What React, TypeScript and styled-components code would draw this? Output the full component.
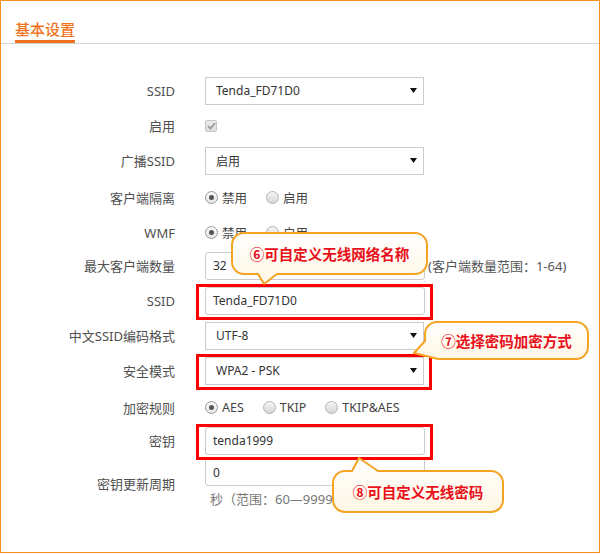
import React from "react";
import styled, { createGlobalStyle } from "styled-components";

const Global = createGlobalStyle`
  html, body { margin: 0; padding: 0; background: #fff; }
  body { font-family: "Noto Sans", "Noto Sans CJK SC", sans-serif; }
  * { box-sizing: border-box; }
`;

const Page = styled.div`
  position: relative;
  width: 600px;
  height: 553px;
  border: 1px solid #f39120;
  overflow: hidden;
  background: #fff;
`;

const Header = styled.div`
  display: flex;
  align-items: flex-end;
  padding: 18px 0 0 14px;
  border-bottom: 1px solid #d4d4d4;
`;

const Title = styled.h2`
  margin: 0;
  font-family: "Noto Sans CJK SC", sans-serif;
  font-size: 15px;
  line-height: 20px;
  font-weight: 500;
  color: #f0731e;
  padding-bottom: 1px;
  border-bottom: 3px solid #f07020;
`;

const Form = styled.div`
  padding-top: 29px;
`;

const Row = styled.div<{ $pt?: number; $auto?: boolean }>`
  display: grid;
  grid-template-columns: 174px 1fr;
  column-gap: 30px;
  align-items: center;
  height: ${(p) => (p.$auto ? "auto" : "35px")};
  padding-top: ${(p) => p.$pt ?? 0}px;
`;

const Label = styled.div`
  text-align: right;
  font-size: 13px;
  line-height: 18px;
  color: #4f4f4f;
  font-family: "Noto Sans", "Noto Sans CJK SC", sans-serif;
`;

const Control = styled.div<{ $column?: boolean }>`
  display: flex;
  flex-direction: ${(p) => (p.$column ? "column" : "row")};
  align-items: ${(p) => (p.$column ? "flex-start" : "center")};
`;

const Field = styled.div`
  position: relative;
  display: flex;
`;

const SelectBox = styled.div`
  width: 219px;
  height: 28px;
  border: 1px solid #ccc;
  background: #fff;
  display: flex;
  align-items: center;
  justify-content: space-between;
  padding: 0 6px 0 10px;
  font-size: 12px;
  color: #333;
  font-family: "Noto Sans", "Noto Sans CJK SC", sans-serif;
`;

const TextInput = styled.input`
  width: 220px;
  height: 28px;
  border: 1px solid #ccc;
  border-radius: 3px;
  padding: 0 7px;
  font-size: 12px;
  color: #333;
  font-family: "Noto Sans", "Noto Sans CJK SC", sans-serif;
  background: #fff;
  outline: none;
`;

const Highlight = styled.span`
  position: absolute;
  top: -3px;
  right: -8px;
  bottom: -5px;
  left: -9px;
  border: 3px solid #ff0000;
  pointer-events: none;
`;

const CheckBox = styled.span`
  width: 12px;
  height: 12px;
  border: 1px solid #c6c6c6;
  border-radius: 2px;
  background: linear-gradient(#ececec, #dcdcdc);
  display: flex;
  align-items: center;
  justify-content: center;
`;

const Option = styled.label`
  display: flex;
  align-items: center;
  gap: 4px;
  margin-right: 19px;
  font-size: 12.5px;
  color: #444;
  font-family: "Noto Sans", "Noto Sans CJK SC", sans-serif;
`;

const RadioDot = styled.span<{ $on?: boolean }>`
  position: relative;
  width: 13px;
  height: 13px;
  border-radius: 50%;
  border: 1px solid ${(p) => (p.$on ? "#9a9a9a" : "#b4b4b4")};
  background: ${(p) =>
    p.$on ? "linear-gradient(#fafafa, #e6e6e6)" : "linear-gradient(#f6f6f6, #d6d6d6)"};
  &::after {
    content: "";
    display: ${(p) => (p.$on ? "block" : "none")};
    position: absolute;
    left: 50%;
    top: 50%;
    width: 5px;
    height: 5px;
    margin: -2.5px 0 0 -2.5px;
    border-radius: 50%;
    background: #555;
  }
`;

const Hint = styled.span`
  margin-left: 3px;
  font-size: 13px;
  color: #555;
  font-family: "Noto Sans", "Noto Sans CJK SC", sans-serif;
`;

const SubHint = styled.div`
  margin: 3px 0 0 5px;
  font-size: 13px;
  line-height: 20px;
  color: #777;
  font-family: "Noto Sans", "Noto Sans CJK SC", sans-serif;
`;

const Callout = styled.div<{ $x: number; $y: number; $w: number; $h: number }>`
  position: absolute;
  left: ${(p) => p.$x - 1}px;
  top: ${(p) => p.$y - 1}px;
  width: ${(p) => p.$w}px;
  height: ${(p) => p.$h}px;
  display: flex;
  align-items: center;
  justify-content: center;
  z-index: 3;
`;

const BubbleSvg = styled.svg`
  position: absolute;
  left: 0;
  top: 0;
  overflow: visible;
`;

const CalloutText = styled.span`
  position: relative;
  font-family: "Noto Sans CJK SC", sans-serif;
  font-weight: 700;
  font-size: 14.5px;
  color: #e8101a;
  white-space: nowrap;
`;

const Arrow = () => (
  <svg width="7" height="5" viewBox="0 0 7 5">
    <path d="M0 0 H7 L3.5 5 Z" fill="#111" />
  </svg>
);

const Select = ({ value }: { value: string }) => (
  <SelectBox>
    <span>{value}</span>
    <Arrow />
  </SelectBox>
);

const Radio = ({ on, text }: { on?: boolean; text: string }) => (
  <Option>
    <RadioDot $on={on} />
    <span>{text}</span>
  </Option>
);

type BubbleProps = { x: number; y: number; w: number; h: number; d: string; id: string; text: string };

const Bubble = ({ x, y, w, h, d, id, text }: BubbleProps) => (
  <Callout $x={x} $y={y} $w={w} $h={h}>
    <BubbleSvg width={w} height={h}>
      <defs>
        <linearGradient id={id} x1="0" y1="0" x2="0" y2="1">
          <stop offset="0" stopColor="#ffffff" />
          <stop offset="1" stopColor="#fff7e4" />
        </linearGradient>
      </defs>
      <path d={d} fill={`url(#${id})`} stroke="#f5a422" strokeWidth="2" strokeLinejoin="round" />
    </BubbleSvg>
    <CalloutText>{text}</CalloutText>
  </Callout>
);

const r = 12;
const b1w = 195, b1h = 41;
const b1 = `M${r},0 H${b1w - r} A${r},${r} 0 0 1 ${b1w},${r} V${b1h - r} A${r},${r} 0 0 1 ${b1w - r},${b1h} H45 L32,51 L26,${b1h} H${r} A${r},${r} 0 0 1 0,${b1h - r} V${r} A${r},${r} 0 0 1 ${r},0 Z`;
const b2w = 163, b2h = 37;
const b2 = `M${r},0 H${b2w - r} A${r},${r} 0 0 1 ${b2w},${r} V${b2h - r} A${r},${r} 0 0 1 ${b2w - r},${b2h} H13 L-11,31 L0,19 V${r} A${r},${r} 0 0 1 ${r},0 Z`;
const b3w = 170, b3h = 41;
const b3 = `M${r},0 H19 L26,-13 L45,0 H${b3w - r} A${r},${r} 0 0 1 ${b3w},${r} V${b3h - r} A${r},${r} 0 0 1 ${b3w - r},${b3h} H${r} A${r},${r} 0 0 1 0,${b3h - r} V${r} A${r},${r} 0 0 1 ${r},0 Z`;

export default function App() {
  return (
    <>
      <Global />
      <Page>
        <Header>
          <Title>基本设置</Title>
        </Header>
        <Form>
          <Row>
            <Label>SSID</Label>
            <Control>
              <Select value="Tenda_FD71D0" />
            </Control>
          </Row>
          <Row>
            <Label>启用</Label>
            <Control>
              <CheckBox>
                <svg width="9" height="8" viewBox="0 0 9 8">
                  <path d="M1 4.2 L3.4 6.5 L8 1.2" fill="none" stroke="#9a9a9a" strokeWidth="1.8" />
                </svg>
              </CheckBox>
            </Control>
          </Row>
          <Row>
            <Label>广播SSID</Label>
            <Control>
              <Select value="启用" />
            </Control>
          </Row>
          <Row $pt={4}>
            <Label>客户端隔离</Label>
            <Control>
              <Radio on text="禁用" />
              <Radio text="启用" />
            </Control>
          </Row>
          <Row $pt={4}>
            <Label>WMF</Label>
            <Control>
              <Radio on text="禁用" />
              <Radio text="启用" />
            </Control>
          </Row>
          <Row>
            <Label>最大客户端数量</Label>
            <Control>
              <TextInput readOnly value="32" />
              <Hint>(客户端数量范围：1-64)</Hint>
            </Control>
          </Row>
          <Row>
            <Label>SSID</Label>
            <Control>
              <Field>
                <TextInput readOnly value="Tenda_FD71D0" />
                <Highlight />
              </Field>
            </Control>
          </Row>
          <Row>
            <Label>中文SSID编码格式</Label>
            <Control>
              <Select value="UTF-8" />
            </Control>
          </Row>
          <Row>
            <Label>安全模式</Label>
            <Control>
              <Field>
                <Select value="WPA2 - PSK" />
                <Highlight />
              </Field>
            </Control>
          </Row>
          <Row $pt={4}>
            <Label>加密规则</Label>
            <Control>
              <Radio on text="AES" />
              <Radio text="TKIP" />
              <Radio text="TKIP&AES" />
            </Control>
          </Row>
          <Row>
            <Label>密钥</Label>
            <Control>
              <Field>
                <TextInput readOnly value="tenda1999" />
                <Highlight />
              </Field>
            </Control>
          </Row>
          <Row $auto>
            <Label>密钥更新周期</Label>
            <Control $column>
              <TextInput readOnly value="0" />
              <SubHint>秒（范围：60—99999）</SubHint>
            </Control>
          </Row>
        </Form>
        <Bubble id="g1" x={232} y={233} w={b1w} h={b1h} d={b1} text="⑥可自定义无线网络名称" />
        <Bubble id="g2" x={425} y={322} w={b2w} h={b2h} d={b2} text="⑦选择密码加密方式" />
        <Bubble id="g3" x={333} y={471} w={b3w} h={b3h} d={b3} text="⑧可自定义无线密码" />
      </Page>
    </>
  );
}
